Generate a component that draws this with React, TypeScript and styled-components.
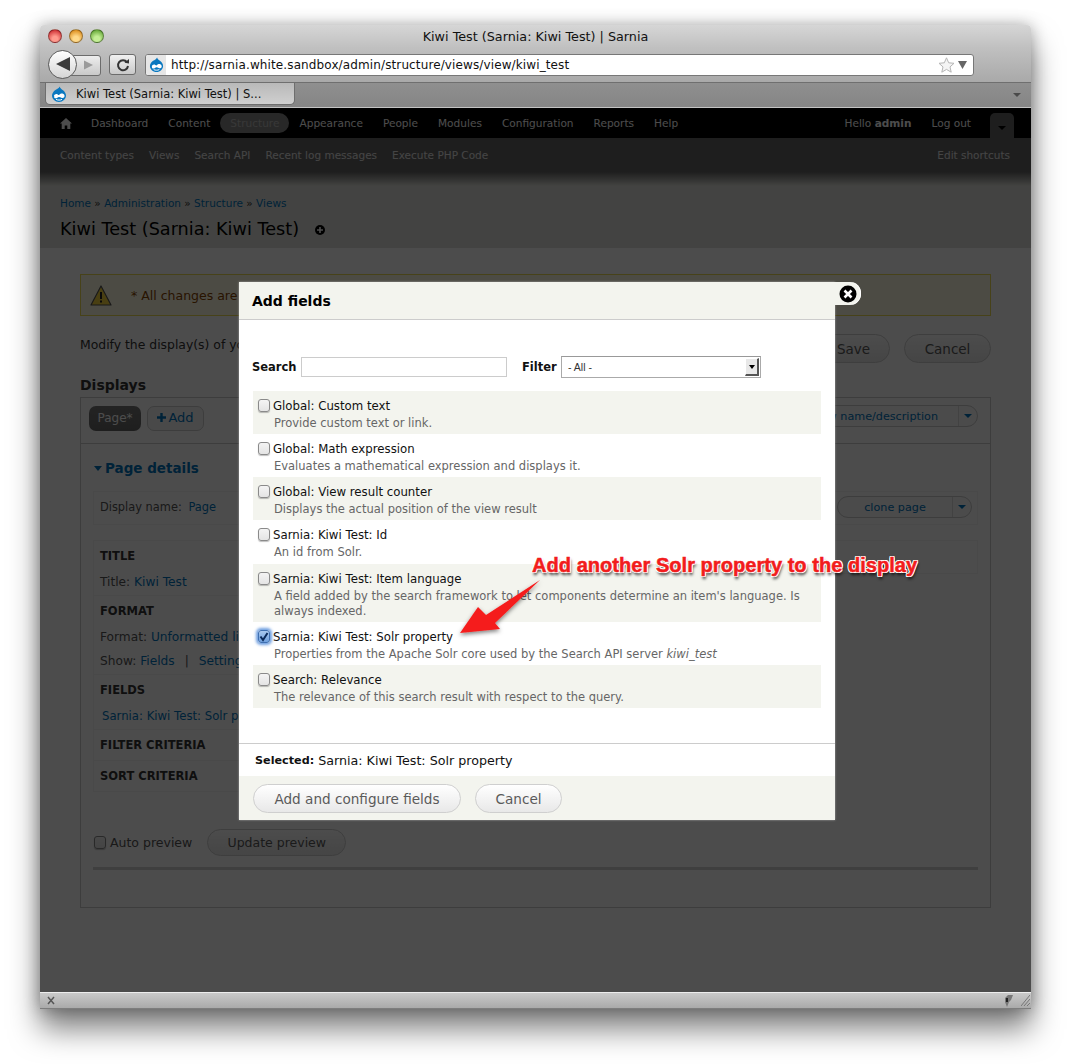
import React from "react";
import styled, { createGlobalStyle } from "styled-components";

const Global = createGlobalStyle`
  html, body { margin: 0; padding: 0; background: #fff; }
  body { font-family: "DejaVu Sans", "Liberation Sans", sans-serif; }
  * { box-sizing: border-box; }
`;

const Stage = styled.div`
  width: 1071px;
  height: 1064px;
  padding: 25px 40px 0;
  overflow: hidden;
`;
const Win = styled.div`
  position: relative;
  width: 991px;
  height: 984px;
  display: flex;
  flex-direction: column;
  border-radius: 4px 4px 0 0;
  box-shadow: 0 20px 30px rgba(0, 0, 0, 0.5), 0 0 16px rgba(0, 0, 0, 0.3);
`;
const Chrome = styled.div`
  height: 58px;
  background: linear-gradient(#d6d6d6, #c0c0c0 40%, #a9a9a9);
  border-radius: 4px 4px 0 0;
  border-bottom: 1px solid #6f6f6f;
  display: flex;
  flex-direction: column;
  flex: none;
`;
const TitleRow = styled.div`
  height: 23px;
  position: relative;
  display: flex;
  align-items: center;
  justify-content: center;
  font-size: 12.75px;
  color: #111;
  flex: none;
`;
const Lights = styled.div`
  position: absolute;
  left: 8px;
  top: 4px;
  display: flex;
  gap: 7px;
`;
const Light = styled.span<{ $c: string; $d: string }>`
  width: 14px;
  height: 14px;
  border-radius: 50%;
  border: 1px solid rgba(0, 0, 0, 0.35);
  background: radial-gradient(circle at 50% 75%, ${(p) => p.$c} 25%, ${(p) => p.$d} 90%);
`;
const NavRow = styled.div`
  display: flex;
  align-items: center;
  height: 33px;
  padding-left: 8px;
  flex: none;
`;
const BackForward = styled.div`
  width: 53px;
  height: 30px;
  position: relative;
  flex: none;
`;
const BackBtn = styled.div`
  position: absolute;
  left: 0;
  top: 0;
  width: 29px;
  height: 29px;
  border-radius: 50%;
  background: linear-gradient(#fff, #d5d5d5);
  border: 1px solid #5a5a5a;
  display: flex;
  align-items: center;
  justify-content: center;
  z-index: 1;
`;
const ForwardBtn = styled.div`
  position: absolute;
  left: 20px;
  top: 5px;
  width: 33px;
  height: 21px;
  border-radius: 0 3px 3px 0;
  background: linear-gradient(#ededed, #c9c9c9);
  border: 1px solid #6c6c6c;
  display: flex;
  align-items: center;
  justify-content: flex-end;
  padding-right: 7px;
`;
const ReloadBtn = styled.div`
  width: 27px;
  height: 21px;
  margin-left: 8px;
  border-radius: 3px;
  background: linear-gradient(#f0f0f0, #c9c9c9);
  border: 1px solid #6c6c6c;
  display: flex;
  align-items: center;
  justify-content: center;
  flex: none;
`;
const UrlBar = styled.div`
  width: 829px;
  height: 22px;
  margin-left: 9px;
  background: #fff;
  border: 1px solid #777;
  border-radius: 3px;
  display: flex;
  align-items: center;
  font-size: 12px;
  color: #111;
  flex: none;
`;
const UrlIcon = styled.span`
  width: 20px;
  height: 20px;
  background: #e6e6e6;
  border-radius: 2px 0 0 2px;
  display: flex;
  align-items: center;
  justify-content: center;
  margin-right: 5px;
  flex: none;
`;
const UrlText = styled.span`
  flex: 1;
  letter-spacing: 0.12px;
`;
const UrlEnd = styled.span`
  display: flex;
  align-items: center;
  gap: 3px;
  padding-right: 6px;
`;
const TabBar = styled.div`
  height: 25px;
  flex: none;
  background: linear-gradient(#8f8f8f, #858585);
  border-bottom: 1px solid #c4c4c4;
  padding-left: 5px;
  display: flex;
  align-items: flex-start;
  position: relative;
`;
const Tab = styled.div`
  width: 250px;
  height: 22px;
  background: linear-gradient(#b9b9b9, #cfcfcf);
  border: 1px solid #6e6e6e;
  border-top: none;
  border-radius: 0 0 5px 5px;
  display: flex;
  align-items: center;
  padding-left: 5px;
  font-size: 11.5px;
  color: #111;
  gap: 9px;
  white-space: nowrap;
`;
const TabChevron = styled.span`
  position: absolute;
  right: 10px;
  top: 10px;
  width: 0;
  height: 0;
  border-left: 4px solid transparent;
  border-right: 4px solid transparent;
  border-top: 4px solid #4a4a4a;
`;
const PageArea = styled.div`
  flex: 1;
  position: relative;
  overflow: hidden;
  background: #fff;
  display: flex;
  flex-direction: column;
`;
const StatusBar = styled.div`
  height: 17px;
  flex: none;
  border-top: 1px solid #ededed;
  border-bottom: 1px solid #7d7d7d;
  background: linear-gradient(#c9c9c9, #aaa);
  display: flex;
  align-items: center;
  justify-content: space-between;
  padding: 0 1px 0 7px;
`;
const StatusEnd = styled.span`
  display: flex;
  align-items: center;
  gap: 7px;
`;

/* Drupal page */
const AdminBar = styled.div`
  height: 30px;
  background: #000;
  display: flex;
  align-items: center;
  padding: 0 17px 0 20px;
  font-size: 10.57px;
  color: #fff;
  flex: none;
  white-space: nowrap;
`;
const HomeWrap = styled.span`
  width: 21px;
  display: flex;
`;
const AdminItem = styled.span<{ $active?: boolean }>`
  padding: 0 10px;
  height: 20px;
  line-height: 20px;
  border-radius: 10px;
  background: ${(p) => (p.$active ? "#888" : "transparent")};
  color: ${(p) => (p.$active ? "#bbb" : "#fff")};
`;
const Spacer = styled.span`
  flex: 1;
`;
const UserItem = styled.span`
  padding: 0 10px;
  b { font-weight: 700; }
`;
const ToggleTab = styled.span`
  width: 24px;
  height: 25px;
  margin: 5px 0 0 9px;
  align-self: flex-start;
  background: #666;
  border-radius: 5px 5px 0 0;
  display: flex;
  align-items: center;
  justify-content: center;
`;
const ToggleArrow = styled.span`
  width: 0;
  height: 0;
  margin-top: 4px;
  border-left: 4px solid transparent;
  border-right: 4px solid transparent;
  border-top: 4px solid #000;
`;
const Shortcuts = styled.div`
  height: 34px;
  background: #666;
  display: flex;
  align-items: center;
  justify-content: space-between;
  padding: 0 21px 0 20px;
  font-size: 10.5px;
  color: #e6e6e6;
  flex: none;
`;
const ShortcutList = styled.div`
  display: flex;
  gap: 15px;
`;
const PageHeader = styled.div`
  height: 76px;
  flex: none;
  background: linear-gradient(#666 0, #e1e2dc 14px, #e1e2dc);
  padding: 25px 20px 0;
`;
const Crumbs = styled.div`
  font-size: 10.5px;
  color: #333;
  a { color: #0074bd; text-decoration: none; }
`;
const PageTitle = styled.h1`
  margin: 10px 0 0;
  font-size: 17.65px;
  font-weight: 400;
  color: #000;
  display: flex;
  align-items: center;
  gap: 16px;
`;
const TitlePlus = styled.span`
  width: 10px;
  height: 10px;
  border-radius: 50%;
  background: #000;
  color: #fff;
  display: flex;
  align-items: center;
  justify-content: center;
  margin-top: 2px;
`;
const Content = styled.div`
  padding: 26px 40px 0;
  color: #333;
  font-size: 12px;
`;
const Warning = styled.div`
  height: 42px;
  background: #fffce5;
  border: 1px solid #ed5;
  display: flex;
  align-items: center;
  padding-left: 9px;
  gap: 19px;
  color: #840;
  font-size: 12.5px;
`;
const ActionRow = styled.div`
  display: flex;
  align-items: center;
  height: 29px;
  margin-top: 18px;
  gap: 14px;
`;
const ActionText = styled.span`
  flex: 1;
  color: #333;
  font-size: 12.4px;
  margin-top: -8px;
`;
const PillButton = styled.span<{ $w?: number; $h?: number; $fs?: number }>`
  width: ${(p) => (p.$w ? `${p.$w}px` : "auto")};
  height: ${(p) => p.$h ?? 29}px;
  border-radius: 15px;
  border: 1px solid #cfcfcf;
  background: linear-gradient(#fff, #e8e8e8);
  color: #5a5a5a;
  font-size: ${(p) => p.$fs ?? 13.5}px;
  display: inline-flex;
  align-items: center;
  justify-content: center;
  flex: none;
`;
const DisplaysHead = styled.h2`
  margin: 13px 0 3px;
  font-size: 14px;
  line-height: 18px;
  font-weight: 700;
  color: #333;
`;
const DisplaysBox = styled.div`
  height: 511px;
  border: 1px solid #ccc;
`;
const TabsRow = styled.div`
  height: 46px;
  border-bottom: 1px solid #ccc;
  display: flex;
  align-items: flex-start;
  padding: 8px 12px 0 8px;
  gap: 6px;
`;
const ActivePill = styled.span`
  width: 52px;
  height: 25px;
  border-radius: 7px;
  background: #666 linear-gradient(#777, #666);
  color: #fff;
  font-size: 12px;
  padding-bottom: 2px;
  display: flex;
  align-items: center;
  justify-content: center;
`;
const AddPill = styled.span`
  width: 57px;
  height: 25px;
  border-radius: 7px;
  border: 1px solid #ccc;
  background: #f5f5f5;
  color: #0074bd;
  font-size: 13px;
  gap: 2px;
  padding-bottom: 2px;
  display: flex;
  align-items: center;
  justify-content: center;
`;
const SplitDrop = styled.span<{ $w: number; $ml?: boolean }>`
  width: ${(p) => p.$w}px;
  height: 22px;
  margin-left: ${(p) => (p.$ml ? "auto" : "0")};
  margin-top: ${(p) => (p.$ml ? "-1px" : "0")};
  border: 1px solid #ccc;
  border-radius: 11px;
  color: #0074bd;
  font-size: 11.2px;
  display: flex;
  align-items: center;
  background: #fafafa;
  white-space: nowrap;
`;
const SplitLabel = styled.span<{ $end?: boolean }>`
  flex: 1;
  text-align: ${(p) => (p.$end ? "right" : "center")};
  padding-right: ${(p) => (p.$end ? "20px" : "0")};
`;
const SplitArrow = styled.span`
  width: 19px;
  height: 100%;
  border-left: 1px solid #ddd;
  display: flex;
  align-items: center;
  justify-content: center;
  &::after {
    content: "";
    border-left: 4px solid transparent;
    border-right: 4px solid transparent;
    border-top: 4px solid #0074bd;
  }
`;
const Details = styled.div`
  padding: 15px 12px 0;
`;
const DetailsHead = styled.div`
  display: flex;
  align-items: center;
  height: 18px;
  gap: 3px;
  font-size: 13.5px;
  font-weight: 700;
  color: #0074bd;
  &::before {
    content: "";
    margin-left: 1px;
    border-left: 4px solid transparent;
    border-right: 4px solid transparent;
    border-top: 5px solid #0074bd;
  }
`;
const NameBar = styled.div`
  margin-top: 14px;
  height: 34px;
  border: 1px solid #f3f3f3;
  padding: 0 5px 2px 6px;
  display: flex;
  align-items: center;
  justify-content: space-between;
  font-size: 11.4px;
  color: #555;
  a { color: #0074bd; margin-left: 3px; }
`;
const SettingsRow = styled.div`
  margin-top: 15px;
  display: flex;
  align-items: flex-start;
  gap: 10px;
`;
const SettingsCol = styled.div`
  width: 420px;
  height: 252px;
  border: 1px solid #f3f3f3;
  padding: 0 6px;
  flex: none;
`;
const SideCol = styled.div`
  flex: 1;
  height: 34px;
  border: 1px solid #f3f3f3;
`;
const Section = styled.div<{ $h: number }>`
  height: ${(p) => p.$h}px;
  border-bottom: 1px solid #f3f3f3;
  margin: 0 -6px;
  padding: 8px 6px 0;
  &:last-child { border-bottom: none; }
`;
const SectionHead = styled.div`
  font-size: 11.5px;
  font-weight: 700;
  line-height: 14px;
  color: #333;
`;
const SectionLine = styled.div<{ $inset?: boolean }>`
  margin-top: 11px;
  padding-left: ${(p) => (p.$inset ? "2px" : "0")};
  font-size: ${(p) => (p.$inset ? "11.7px" : "12.2px")};
  line-height: 16px;
  color: #555;
  white-space: nowrap;
  & + & { margin-top: 8px; }
  a { color: #0074bd; }
`;
const LinkSep = styled.span`
  margin: 0 10px;
`;
const PreviewRow = styled.div`
  margin-top: 36px;
  height: 28px;
  display: flex;
  align-items: center;
  padding-left: 13px;
  font-size: 12.5px;
  color: #555;
`;
const PreviewLabel = styled.span`
  margin: 0 15px 0 4px;
`;
const Rule = styled.div`
  margin: 11px 12px 0;
  height: 3px;
  background: #d3d3d3;
`;

/* overlay + dialog */
const Overlay = styled.div`
  position: absolute;
  inset: 0;
  background: rgba(0, 0, 0, 0.7);
`;
const Dialog = styled.div`
  position: absolute;
  left: 199px;
  top: 174px;
  width: 596px;
  height: 538px;
  background: #fff;
  display: flex;
  flex-direction: column;
  box-shadow: 0 0 2px rgba(255, 255, 255, 0.5);
`;
const DialogHead = styled.div`
  height: 38px;
  flex: none;
  background: #f3f4ee;
  border-bottom: 1px solid #ccc;
  padding-left: 13px;
  display: flex;
  align-items: center;
  font-size: 14px;
  font-weight: 700;
  color: #000;
`;
const CloseTab = styled.span`
  position: absolute;
  left: 596px;
  top: 0;
  margin-left: -8px;
  width: 34px;
  height: 23px;
  padding: 1px 0 0 8px;
  background: #f3f4ee;
  border-radius: 0 11px 11px 0;
  display: flex;
  align-items: center;
  justify-content: center;
  box-shadow: inset -1px 0 0 #fff;
`;
const FilterRow = styled.div`
  height: 71px;
  flex: none;
  padding: 37px 0 0 13px;
  display: flex;
  align-items: flex-start;
  font-size: 12px;
`;
const FilterLabel = styled.label`
  font-weight: 700;
  color: #111;
  line-height: 20px;
  width: 49px;
  flex: none;
  font-size: 11.5px;
`;
const SearchInput = styled.input`
  width: 206px;
  height: 20px;
  border: 1px solid #ccc;
  background: #fff;
  padding: 0;
  flex: none;
  margin-right: 15px;
`;
const SelectBox = styled.div`
  width: 200px;
  height: 22px;
  margin: -1px 0 0 -10px;
  border: 1px solid #aaa;
  border-top-color: #999;
  display: flex;
  align-items: center;
  justify-content: space-between;
  padding: 0 1px 0 6px;
  font-family: "Liberation Sans", sans-serif;
  font-size: 10.5px;
  color: #333;
`;
const SelectArrow = styled.span`
  width: 14px;
  height: 18px;
  background: #e8e8e8;
  border-right: 2px solid #555;
  border-bottom: 2px solid #555;
  border-left: 1px solid #fff;
  border-top: 1px solid #fff;
  display: flex;
  align-items: center;
  justify-content: center;
  &::after {
    content: "";
    border-left: 3px solid transparent;
    border-right: 3px solid transparent;
    border-top: 4px solid #000;
  }
`;
const FieldList = styled.div`
  margin: 0 14px;
  height: 317px;
  flex: none;
`;
const FieldRow = styled.div<{ $odd: boolean; $h: number }>`
  height: ${(p) => p.$h}px;
  background: ${(p) => (p.$odd ? "#f3f4ee" : "#fff")};
  padding: 7px 5px 0 5px;
  display: grid;
  grid-template-columns: 15px 1fr;
  grid-auto-rows: min-content;
  column-gap: 0;
`;
const Check = styled.span<{ $on?: boolean }>`
  width: 12px;
  height: 13px;
  margin-top: 1px;
  border-radius: 3px;
  border: 1px solid ${(p) => (p.$on ? "#3f6fb0" : "#8a8a8a")};
  background: ${(p) => (p.$on ? "linear-gradient(#a8c8ee, #6f9fdc)" : "linear-gradient(#f4f4f4, #e4e4e4)")};
  box-shadow: ${(p) => (p.$on ? "0 0 3px 2px #6f9fe0" : "0 1px 1px rgba(0,0,0,.25)")};
  display: flex;
  align-items: center;
  justify-content: center;
`;
const FieldLabel = styled.div`
  font-size: 11.75px;
  line-height: 15px;
  padding-top: 1px;
  color: #111;
`;
const FieldDesc = styled.div`
  grid-column: 2;
  margin: 2px 0 0 1px;
  font-size: 11.5px;
  line-height: 15px;
  color: #666;
  em { font-style: italic; }
`;
const SelectedRow = styled.div`
  border-top: 1px solid #ccc;
  margin-top: 35px;
  height: 33px;
  flex: none;
  padding: 0 16px;
  display: flex;
  align-items: center;
  gap: 4px;
  font-size: 12.7px;
  color: #111;
  b { font-weight: 700; font-size: 11.2px; }
`;
const DialogFoot = styled.div`
  flex: 1;
  background: #f3f4ee;
  padding: 8px 0 0 14px;
  display: flex;
  align-items: flex-start;
  gap: 14px;
`;
const Callout = styled.div`
  position: absolute;
  left: 492px;
  top: 444px;
  white-space: nowrap;
  font-family: "Liberation Sans", sans-serif;
  font-weight: 700;
  font-size: 20.1px;
  line-height: 26px;
  color: #f21c1c;
  -webkit-text-stroke: 0.5px #f21c1c;
  text-shadow: 1px 0 0 #fff, -1px 0 0 #fff, 0 1px 0 #fff, 0 -1px 0 #fff, 1px 1px 0 #fff, -1px -1px 0 #fff,
    1px -1px 0 #fff, -1px 1px 0 #fff, 1px 3px 3px rgba(0, 0, 0, 0.8);
`;
const ArrowSvg = styled.svg`
  position: absolute;
  left: 415px;
  top: 472px;
  overflow: visible;
`;

const Drop = ({ s = 16 }: { s?: number }) => (
  <svg width={s} height={s} viewBox="0 0 16 16">
    <path d="M8.6.4C8.9 2 10.6 3 12 4.2c1.7 1.4 3 3.2 3 5.4C15 13.1 11.9 16 8 16s-7-2.9-7-6.4c0-2.4 1.6-4.3 3.4-5.6C6 3 8 2.2 8.6.4z" fill="#0a78c0" />
    <path d="M2.8 10c.6-1.6 2.4-2.6 3.9-1.6.7.5 1 .8 1.6.3.9-.9 2.4-1.5 3.7-1 1.3.5 1.9 1.9 1.4 3.1-.5 1.2-1.9 1.4-3 1-1-.3-2-1.1-3.1-.6-1 .5-2 1.4-3.2 1-.9-.2-1.2-1.2-.8-2.2z" fill="#fff" />
    <path d="M5 13.4c1.800.9 4.200.9 6 0" stroke="#fff" strokeWidth="1" fill="none" />
  </svg>
);

const HomeIcon = () => (
  <svg width="12" height="11" viewBox="0 0 12 11">
    <path d="M6 0 12 5.600H10.300V11H7.300V7.400H4.700V11H1.700V5.600H0z" fill="#fff" />
  </svg>
);

const Arrow = ({ dir, c, w = 12, h = 12 }: { dir: "l" | "r"; c: string; w?: number; h?: number }) => (
  <svg width={w} height={h} viewBox="0 0 12 12">
    <path d={dir === "l" ? "M12 0V12L0 6z" : "M0 0V12L12 6z"} fill={c} />
  </svg>
);

const PlusGlyph = ({ c = "#fff", s = 6 }: { c?: string; s?: number }) => (
  <svg width={s} height={s} viewBox="0 0 6 6">
    <path d="M2.200 0h1.600v2.200H6v1.600H3.800V6H2.200V3.800H0V2.200h2.200z" fill={c} />
  </svg>
);

type Field = { label: string; h: number; desc: React.ReactNode; on?: boolean };
const fields: Field[] = [
  { label: "Global: Custom text", h: 43, desc: "Provide custom text or link." },
  { label: "Global: Math expression", h: 43, desc: "Evaluates a mathematical expression and displays it." },
  { label: "Global: View result counter", h: 43, desc: "Displays the actual position of the view result" },
  { label: "Sarnia: Kiwi Test: Id", h: 44, desc: "An id from Solr." },
  {
    label: "Sarnia: Kiwi Test: Item language",
    h: 58,
    desc: "A field added by the search framework to let components determine an item's language. Is always indexed.",
  },
  {
    label: "Sarnia: Kiwi Test: Solr property",
    h: 43,
    on: true,
    desc: (
      <>
        Properties from the Apache Solr core used by the Search API server <em>kiwi_test</em>
      </>
    ),
  },
  { label: "Search: Relevance", h: 43, desc: "The relevance of this search result with respect to the query." },
];

const adminItems = ["Dashboard", "Content", "Structure", "Appearance", "People", "Modules", "Configuration", "Reports", "Help"];
const shortcuts = ["Content types", "Views", "Search API", "Recent log messages", "Execute PHP Code"];

export default function App() {
  return (
    <Stage>
      <Global />
      <Win>
        <Chrome>
          <TitleRow>
            <Lights>
              <Light $c="#ff9a8e" $d="#c9232a" />
              <Light $c="#ffd98a" $d="#d98510" />
              <Light $c="#c4ee96" $d="#5aa02c" />
            </Lights>
            Kiwi Test (Sarnia: Kiwi Test) | Sarnia
          </TitleRow>
          <NavRow>
            <BackForward>
              <BackBtn>
                <Arrow dir="l" c="#3c3c3c" w={14} h={14} />
              </BackBtn>
              <ForwardBtn>
                <Arrow dir="r" c="#9b9b9b" w={9} h={10} />
              </ForwardBtn>
            </BackForward>
            <ReloadBtn>
              <svg width="14" height="14" viewBox="0 0 14 14">
                <path d="M11 4.200A5 5 0 1 0 12 8" fill="none" stroke="#333" strokeWidth="2" />
                <path d="M8.500 4.800 13 5.600V1z" fill="#333" />
              </svg>
            </ReloadBtn>
            <UrlBar>
              <UrlIcon>
                <Drop s={15} />
              </UrlIcon>
              <UrlText>http://sarnia.white.sandbox/admin/structure/views/view/kiwi_test</UrlText>
              <UrlEnd>
                <svg width="17" height="16" viewBox="0 0 17 16">
                  <path d="M8.500.8 10.700 5.800 16 6.300 12 9.900 13.200 15.200 8.500 12.400 3.800 15.200 5 9.900 1 6.300 6.300 5.800z" fill="#f4f4f4" stroke="#b5b5b5" />
                </svg>
                <svg width="9" height="8" viewBox="0 0 9 8">
                  <path d="M0 0H9L4.500 8z" fill="#666" />
                </svg>
              </UrlEnd>
            </UrlBar>
          </NavRow>
        </Chrome>
        <TabBar>
          <Tab>
            <Drop s={16} />
            Kiwi Test (Sarnia: Kiwi Test) | S...
          </Tab>
          <TabChevron />
        </TabBar>
        <PageArea>
          <AdminBar>
            <HomeWrap>
              <HomeIcon />
            </HomeWrap>
            {adminItems.map((t) => (
              <AdminItem key={t} $active={t === "Structure"}>
                {t}
              </AdminItem>
            ))}
            <Spacer />
            <UserItem>
              Hello <b>admin</b>
            </UserItem>
            <UserItem>Log out</UserItem>
            <ToggleTab>
              <ToggleArrow />
            </ToggleTab>
          </AdminBar>
          <Shortcuts>
            <ShortcutList>
              {shortcuts.map((t) => (
                <span key={t}>{t}</span>
              ))}
            </ShortcutList>
            <span>Edit shortcuts</span>
          </Shortcuts>
          <PageHeader>
            <Crumbs>
              <a>Home</a> » <a>Administration</a> » <a>Structure</a> » <a>Views</a>
            </Crumbs>
            <PageTitle>
              Kiwi Test (Sarnia: Kiwi Test)
              <TitlePlus>
                <PlusGlyph />
              </TitlePlus>
            </PageTitle>
          </PageHeader>
          <Content>
            <Warning>
              <svg width="22" height="21" viewBox="0 0 22 21">
                <path d="M11 1 21 20H1z" fill="#f5d33c" stroke="#555" strokeWidth="1.200" strokeLinejoin="round" />
                <path d="M10 7h2v7h-2zM10 15.500h2v2h-2z" fill="#222" />
              </svg>
              * All changes are
            </Warning>
            <ActionRow>
              <ActionText>Modify the display(s) of your view below</ActionText>
              <PillButton $w={73}>Save</PillButton>
              <PillButton $w={87}>Cancel</PillButton>
            </ActionRow>
            <DisplaysHead>Displays</DisplaysHead>
            <DisplaysBox>
              <TabsRow>
                <ActivePill>Page*</ActivePill>
                <AddPill>
                  <PlusGlyph c="#0074bd" s={9} />
                  Add
                </AddPill>
                <SplitDrop $w={200} $ml>
                  <SplitLabel $end>edit view name/description</SplitLabel>
                  <SplitArrow />
                </SplitDrop>
              </TabsRow>
              <Details>
                <DetailsHead>Page details</DetailsHead>
                <NameBar>
                  <span>
                    Display name: <a>Page</a>
                  </span>
                  <SplitDrop $w={135}>
                    <SplitLabel>clone page</SplitLabel>
                    <SplitArrow />
                  </SplitDrop>
                </NameBar>
                <SettingsRow>
                  <SettingsCol>
                    <Section $h={55}>
                      <SectionHead>TITLE</SectionHead>
                      <SectionLine>
                        Title: <a>Kiwi Test</a>
                      </SectionLine>
                    </Section>
                    <Section $h={79}>
                      <SectionHead>FORMAT</SectionHead>
                      <SectionLine>
                        Format: <a>Unformatted list</a>
                      </SectionLine>
                      <SectionLine>
                        Show: <a>Fields</a>
                        <LinkSep>|</LinkSep>
                        <a>Settings</a>
                      </SectionLine>
                    </Section>
                    <Section $h={55}>
                      <SectionHead>FIELDS</SectionHead>
                      <SectionLine $inset>
                        <a>Sarnia: Kiwi Test: Solr property</a>
                      </SectionLine>
                    </Section>
                    <Section $h={31}>
                      <SectionHead>FILTER CRITERIA</SectionHead>
                    </Section>
                    <Section $h={30}>
                      <SectionHead>SORT CRITERIA</SectionHead>
                    </Section>
                  </SettingsCol>
                  <SideCol />
                </SettingsRow>
              </Details>
              <PreviewRow>
                <Check />
                <PreviewLabel>Auto preview</PreviewLabel>
                <PillButton $w={139} $h={27} $fs={12.5}>
                  Update preview
                </PillButton>
              </PreviewRow>
              <Rule />
            </DisplaysBox>
          </Content>
          <Overlay />
          <Dialog>
            <DialogHead>Add fields</DialogHead>
            <CloseTab>
              <svg width="18" height="18" viewBox="0 0 18 18">
                <circle cx="9" cy="9" r="8.500" fill="#000" />
                <path d="M5.500 5.500l7 7M12.500 5.500l-7 7" stroke="#fff" strokeWidth="2.600" />
              </svg>
            </CloseTab>
            <FilterRow>
              <FilterLabel>Search</FilterLabel>
              <SearchInput aria-label="Search" />
              <FilterLabel>Filter</FilterLabel>
              <SelectBox>
                - All -
                <SelectArrow />
              </SelectBox>
            </FilterRow>
            <FieldList>
              {fields.map((f, i) => (
                <FieldRow key={f.label} $odd={i % 2 === 0 ? i !== 3 : i === 4} $h={f.h}>
                  <Check $on={f.on}>
                    {f.on && (
                      <svg width="10" height="10" viewBox="0 0 10 10">
                        <path d="M1.500 4.500 4 8 8.500 1" fill="none" stroke="#0b2a5a" strokeWidth="2" />
                      </svg>
                    )}
                  </Check>
                  <FieldLabel>{f.label}</FieldLabel>
                  <FieldDesc>{f.desc}</FieldDesc>
                </FieldRow>
              ))}
            </FieldList>
            <SelectedRow>
              <b>Selected:</b> Sarnia: Kiwi Test: Solr property
            </SelectedRow>
            <DialogFoot>
              <PillButton $w={208} $fs={13.6}>
                Add and configure fields
              </PillButton>
              <PillButton $w={87} $fs={13.6}>
                Cancel
              </PillButton>
            </DialogFoot>
          </Dialog>
          <Callout>Add another Solr property to the display</Callout>
          <ArrowSvg width="90" height="60" viewBox="0 0 90 60">
            <defs>
              <filter id="arrowShade" x="-20%" y="-20%" width="140%" height="150%">
                <feDropShadow dx="0" dy="2" stdDeviation="2" floodColor="#000" floodOpacity="0.5" />
              </filter>
            </defs>
            <path d="M5 53 23 27 31 35 85 0 40 43 45 49z" fill="#f51c1c" filter="url(#arrowShade)" />
          </ArrowSvg>
        </PageArea>
        <StatusBar>
          <svg width="8" height="9" viewBox="0 0 8 9">
            <path d="M1 1l6 7M7 1 1 8" stroke="#555" strokeWidth="1.500" />
          </svg>
          <StatusEnd>
            <svg width="12" height="14" viewBox="0 0 12 14">
              <path d="M3 4 6 1 11 1 9 6 7 8 5 13 3 8z" fill="#777" />
              <path d="M4 4h2v4H4z" fill="#222" />
            </svg>
            <svg width="9" height="11" viewBox="0 0 9 11">
              <path d="M0 11 9 0M3 11 9 4M6 11 9 8" stroke="#777" strokeWidth="1" />
            </svg>
          </StatusEnd>
        </StatusBar>
      </Win>
    </Stage>
  );
}
